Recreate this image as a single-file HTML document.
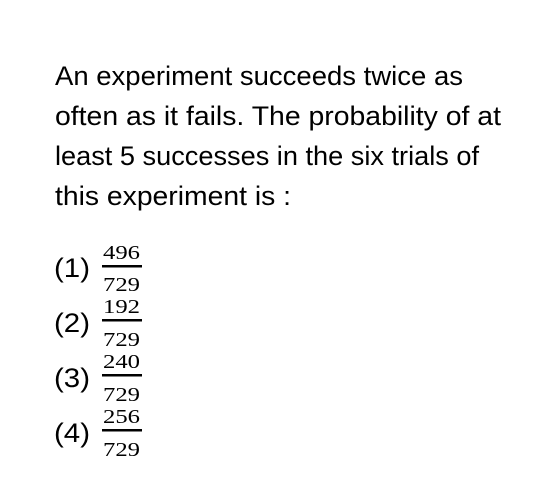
<!DOCTYPE html>
<html><head><meta charset="utf-8"><style>
html,body{margin:0;padding:0;background:#fff;width:555px;height:488px;overflow:hidden}
</style></head><body>
<svg width="555" height="488" xmlns="http://www.w3.org/2000/svg">
<g font-family="Liberation Sans, sans-serif" font-size="27" fill="#000">
<text x="55" y="85" textLength="408" lengthAdjust="spacingAndGlyphs">An experiment succeeds twice as</text>
<text x="55" y="125" textLength="446" lengthAdjust="spacingAndGlyphs">often as it fails. The probability of at</text>
<text x="55" y="165" textLength="424" lengthAdjust="spacingAndGlyphs">least 5 successes in the six trials of</text>
<text x="55" y="205" textLength="236" lengthAdjust="spacingAndGlyphs">this experiment is :</text>
</g>
<g font-family="Liberation Sans, sans-serif" font-size="27" fill="#000">
<text x="54" y="277" textLength="36" lengthAdjust="spacingAndGlyphs">(1)</text>
<text x="54" y="332" textLength="36" lengthAdjust="spacingAndGlyphs">(2)</text>
<text x="54" y="387" textLength="36" lengthAdjust="spacingAndGlyphs">(3)</text>
<text x="54" y="442" textLength="36" lengthAdjust="spacingAndGlyphs">(4)</text>
</g>
<g font-family="Liberation Serif, serif" font-size="20" fill="#000">
<text x="103" y="259" textLength="37" lengthAdjust="spacingAndGlyphs">496</text>
<rect x="102" y="265" width="40" height="2.5"/>
<text x="103" y="291" textLength="37" lengthAdjust="spacingAndGlyphs">729</text>
<text x="103" y="313" textLength="37" lengthAdjust="spacingAndGlyphs">192</text>
<rect x="102" y="319" width="40" height="2.5"/>
<text x="103" y="346" textLength="37" lengthAdjust="spacingAndGlyphs">729</text>
<text x="103" y="368" textLength="37" lengthAdjust="spacingAndGlyphs">240</text>
<rect x="102" y="374" width="40" height="2.5"/>
<text x="103" y="401" textLength="37" lengthAdjust="spacingAndGlyphs">729</text>
<text x="103" y="423" textLength="37" lengthAdjust="spacingAndGlyphs">256</text>
<rect x="102" y="429" width="40" height="2.5"/>
<text x="103" y="456" textLength="37" lengthAdjust="spacingAndGlyphs">729</text>
</g>
</svg>
</body></html>
